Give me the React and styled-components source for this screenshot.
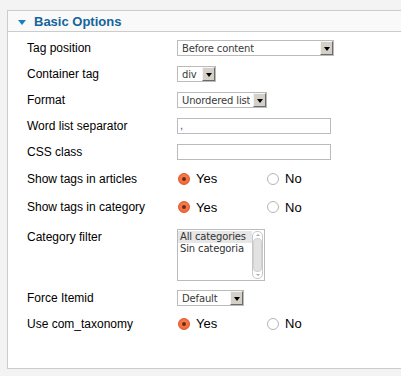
import React from 'react'
import styled, { createGlobalStyle } from 'styled-components';

const Global = createGlobalStyle`
  html, body {
    margin: 0;
    background: #f3f3f3;
    overflow: hidden;
  }
`;

// page + panel

const Page = styled.div`
  width: 401px;
  height: 376px;
  padding: 10px 0 0 7px;
  box-sizing: border-box;
  font-family: "Liberation Sans", Arial, sans-serif;
  overflow: hidden;
`;

const Panel = styled.div`
  width: 430px;
  height: 359px;
  box-sizing: border-box;
  background: #fff;
  border: solid 1px #cccccc;
`;

const Header = styled.div`
  height: 20px;
  background: #f9f9f9;
  border-bottom: solid 1px #cccccc;
  display: flex;
  align-items: center;
  padding-left: 10px;
  gap: 8px;
`;

const Arrow = styled.span`
  width: 0;
  height: 0;
  border-left: 4px solid transparent;
  border-right: 4px solid transparent;
  border-top: 5px solid #1a7fc0;
  margin-top: 2px;
`;

const Title = styled.span`
  font-size: 13px;
  font-weight: bold;
  color: #14649c;
`;

const Body = styled.div`
  padding: 3px 0 0 19px;
`;

const Row = styled.div`
  display: flex;
  align-items: ${p => (p.top ? 'flex-start' : 'center')};
  height: ${p => p.h}px;
  padding-top: ${p => p.pt || 0}px;
  box-sizing: border-box;
`;

const Label = styled.div`
  width: 150px;
  flex-shrink: 0;
  font-size: 12px;
  color: #000;
  padding-top: ${p => (p.top ? 1 : 0)}px;
`;

// form controls

const Select = styled.div`
  width: ${p => p.w}px;
  height: 16px;
  box-sizing: border-box;
  border: solid 1px #bbbbbb;
  background: #fff;
  display: flex;
  align-items: center;
  justify-content: space-between;
  font-family: "DejaVu Sans", sans-serif;
  font-size: 10px;
  letter-spacing: -0.15px;
  white-space: nowrap;
  color: #3a3a3a;
  padding-left: 4px;
  gap: 3px;
`;

const DropText = styled.span`
  overflow: hidden;
`;

const DropBtn = styled.span`
  width: 13px;
  height: 14px;
  flex-shrink: 0;
  box-sizing: border-box;
  background: #d4d0c8;
  border-top: solid 1px #f4f4f4;
  border-left: solid 1px #f4f4f4;
  border-right: solid 1px #6b6b6b;
  border-bottom: solid 1px #6b6b6b;
  display: flex;
  align-items: center;
  justify-content: center;
  &::after {
    content: '';
    border-left: 3px solid transparent;
    border-right: 3px solid transparent;
    border-top: 4px solid #000;
    margin-top: 1px;
  }
`;

const Input = styled.div`
  width: 154px;
  height: 16px;
  box-sizing: border-box;
  border: solid 1px #bbbbbb;
  background: #fff;
  font-size: 11px;
  line-height: 12px;
  padding-left: 2px;
  color: #2a5aa8;
`;

const RadioGroup = styled.div`
  display: flex;
  align-items: center;
`;

const RadioItem = styled.label`
  display: flex;
  align-items: center;
  gap: 6px;
  width: 89px;
  font-size: 13px;
  color: #000;
`;

const Dot = styled.span`
  width: 12px;
  height: 12px;
  box-sizing: border-box;
  border-radius: 50%;
  margin-left: 1px;
  display: flex;
  align-items: center;
  justify-content: center;
  background: ${p => (p.on ? 'radial-gradient(circle at 50% 40%, #f8855a, #ec5f2e)' : '#fff')};
  border: solid 1px ${p => (p.on ? '#dd5a2c' : '#b4b4b4')};
  &::after {
    content: '';
    width: 4px;
    height: 4px;
    border-radius: 50%;
    background: ${p => (p.on ? '#6e2a12' : 'transparent')};
  }
`;

const ListBox = styled.div`
  width: 88px;
  height: 52px;
  box-sizing: border-box;
  border: solid 1px #bbbbbb;
  display: flex;
  font-family: "DejaVu Sans", sans-serif;
  font-size: 10px;
  letter-spacing: -0.15px;
  color: #333;
`;

const Options = styled.div`
  flex: 1;
  padding-top: 1px;
`;

const Option = styled.div`
  height: 12px;
  line-height: 12px;
  padding-left: 2px;
  background: ${p => (p.sel ? '#e6e6e6' : 'transparent')};
`;

const Scroll = styled.div`
  width: 11px;
  margin: 1px 1px 1px 0;
  border: solid 1px #c8c8c8;
  border-radius: 5px;
  box-sizing: border-box;
  display: flex;
  flex-direction: column;
  align-items: center;
  justify-content: space-between;
  padding: 2px 0;
`;

const Thumb = styled.div`
  width: 9px;
  flex: 1;
  margin: 2px 0;
  border-radius: 4px;
  background: #e2e2e2;
  border: solid 1px #d0d0d0;
  box-sizing: border-box;
`;

const Tri = styled.span`
  border-left: 2px solid transparent;
  border-right: 2px solid transparent;
  ${p => (p.up ? 'border-bottom' : 'border-top')}: 2px solid #aaa;
`;

function Drop({ w, children }) {
  return (
    <Select w={w}>
      <DropText>{children}</DropText>
      <DropBtn />
    </Select>
  );
}

function Radios() {
  return (
    <RadioGroup>
      <RadioItem><Dot on /> Yes</RadioItem>
      <RadioItem><Dot /> No</RadioItem>
    </RadioGroup>
  );
}

export default function App() {
  return (
    <Page>
      <Global />
      <Panel>
        <Header>
          <Arrow />
          <Title>Basic Options</Title>
        </Header>
        <Body>
          <Row h={26}>
            <Label>Tag position</Label>
            <Drop w={157}>Before content</Drop>
          </Row>
          <Row h={26}>
            <Label>Container tag</Label>
            <Drop w={39}>div</Drop>
          </Row>
          <Row h={26}>
            <Label>Format</Label>
            <Drop w={90}>Unordered list</Drop>
          </Row>
          <Row h={26}>
            <Label>Word list separator</Label>
            <Input>,</Input>
          </Row>
          <Row h={26}>
            <Label>CSS class</Label>
            <Input />
          </Row>
          <Row h={27}>
            <Label>Show tags in articles</Label>
            <Radios />
          </Row>
          <Row h={30}>
            <Label>Show tags in category</Label>
            <Radios />
          </Row>
          <Row h={65} pt={7} top>
            <Label top>Category filter</Label>
            <ListBox>
              <Options>
                <Option sel>All categories</Option>
                <Option>Sin categoria</Option>
              </Options>
              <Scroll>
                <Tri up />
                <Thumb />
                <Tri />
              </Scroll>
            </ListBox>
          </Row>
          <Row h={22}>
            <Label>Force Itemid</Label>
            <Drop w={67}>Default</Drop>
          </Row>
          <Row h={29}>
            <Label>Use com_taxonomy</Label>
            <Radios />
          </Row>
        </Body>
      </Panel>
    </Page>
  );
}
